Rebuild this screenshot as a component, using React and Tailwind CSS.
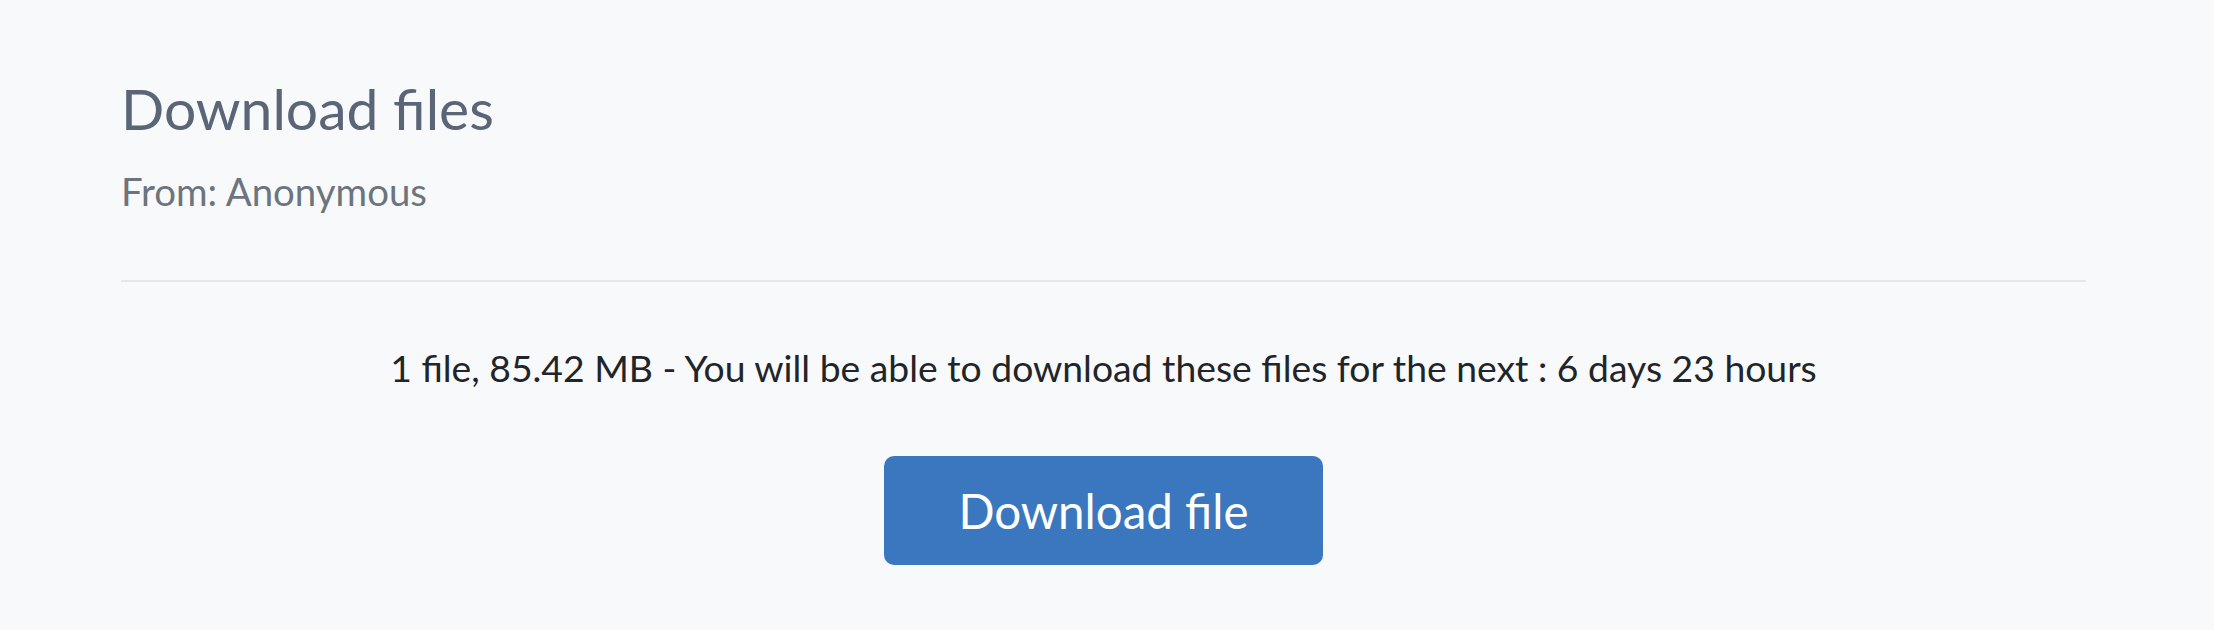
export default function App() {
  return (
    <div className="min-h-[630px] w-full bg-[#f8f9fb] font-['Lato',sans-serif]">
      <div className="pl-[121px] pr-[128px] pt-[74px]">
        <h1 className="text-[57px] leading-[1.2] text-[#5a6577]">Download files</h1>
        <p className="mt-[26px] text-[38.4px] leading-[1.2] text-[#6c757d]">From: Anonymous</p>
        <div className="mt-[66px] h-[2px] bg-[#e5e7eb]" />
        <div className="flex flex-col items-center">
          <p className="mt-[64px] text-[37.3px] leading-[1.2] text-[#212529]">
            1 file, 85.42 MB - You will be able to download these files for the next : 6 days 23 hours
          </p>
          <button className="mt-[65px] flex h-[109px] w-[439px] items-center justify-center rounded-[10px] bg-[#3a77bf] text-[47.5px] text-white">
            Download file
          </button>
        </div>
      </div>
    </div>
  );
}
